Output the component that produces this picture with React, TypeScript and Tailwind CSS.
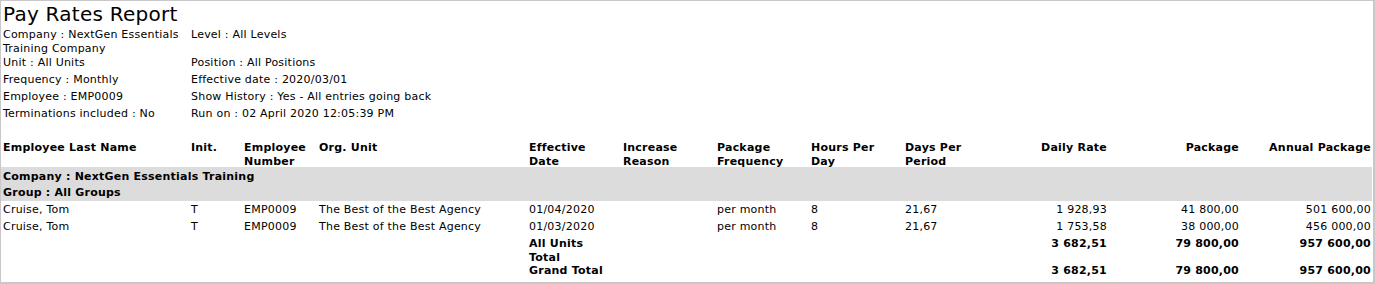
import React from "react";

const F = { fontFamily: '"DejaVu Sans", Verdana, sans-serif' };

const cols = "grid grid-cols-[188px_53px_75px_210px_94px_94px_94px_94px_94px_112px_132px_1fr]";

function InfoRow({ a, b, tall }: { a: React.ReactNode; b: string; tall?: boolean }) {
  return (
    <div className={`grid grid-cols-[188px_1fr] pt-[1px] ${tall ? "h-[28px]" : "h-[17px]"}`}>
      <div className="px-[2px] leading-[14px]">{a}</div>
      <div className="px-[2px] leading-[14px]">{b}</div>
    </div>
  );
}

type Row = string[];

const data: Row[] = [
  ["Cruise, Tom", "T", "EMP0009", "The Best of the Best Agency", "01/04/2020", "", "per month", "8", "21,67", "1 928,93", "41 800,00", "501 600,00"],
  ["Cruise, Tom", "T", "EMP0009", "The Best of the Best Agency", "01/03/2020", "", "per month", "8", "21,67", "1 753,58", "38 000,00", "456 000,00"],
];

function Cell({ children, right }: { children?: React.ReactNode; right?: boolean }) {
  return (
    <div className={`px-[2px] leading-[14px] whitespace-nowrap ${right ? "text-right" : ""}`}>
      {children}
    </div>
  );
}

export default function App() {
  return (
    <div
      className="w-[1375px] h-[284px] bg-white text-black text-[11px] tracking-[0.22px] border-l border-t border-r-2 border-b-2 border-[#c8c8c8] overflow-hidden"
      style={F}
    >
      <div className="px-[2px] text-[20px] leading-[26px] h-[26px] tracking-[0.25px]">Pay Rates Report</div>
      <div>
        <InfoRow tall a={<>Company : NextGen Essentials<br />Training Company</>} b="Level : All Levels" />
        <InfoRow a="Unit : All Units" b="Position : All Positions" />
        <InfoRow a="Frequency : Monthly" b="Effective date : 2020/03/01" />
        <InfoRow a="Employee : EMP0009" b="Show History : Yes - All entries going back" />
        <InfoRow a="Terminations included : No" b="Run on : 02 April 2020 12:05:39 PM" />
      </div>
      <div className="h-[17px]" />
      <div className={`${cols} h-[27px] pt-[1px] font-bold`}>
        <Cell>Employee Last Name</Cell>
        <Cell>Init.</Cell>
        <Cell>Employee<br />Number</Cell>
        <Cell>Org. Unit</Cell>
        <Cell>Effective<br />Date</Cell>
        <Cell>Increase<br />Reason</Cell>
        <Cell>Package<br />Frequency</Cell>
        <Cell>Hours Per<br />Day</Cell>
        <Cell>Days Per<br />Period</Cell>
        <Cell right>Daily Rate</Cell>
        <Cell right>Package</Cell>
        <Cell right>Annual Package</Cell>
      </div>
      <div className="bg-[#dcdcdc] mr-[1px] font-bold">
        <div className="h-[17px] px-[2px] pt-[3px] leading-[14px]">Company : NextGen Essentials Training</div>
        <div className="h-[17px] px-[2px] pt-[2px] leading-[14px]">Group : All Groups</div>
      </div>
      {data.map((r, i) => (
        <div key={i} className={`${cols} h-[17px] pt-[2px]`}>
          {r.map((c, j) => (
            <Cell key={j} right={j >= 9}>
              {c}
            </Cell>
          ))}
        </div>
      ))}
      <div className={`${cols} h-[28px] pt-[2px] font-bold`}>
        <Cell />
        <Cell />
        <Cell />
        <Cell />
        <Cell>All Units<br />Total</Cell>
        <Cell />
        <Cell />
        <Cell />
        <Cell />
        <Cell right>3 682,51</Cell>
        <Cell right>79 800,00</Cell>
        <Cell right>957 600,00</Cell>
      </div>
      <div className={`${cols} h-[17px] pt-[1px] font-bold`}>
        <Cell />
        <Cell />
        <Cell />
        <Cell />
        <Cell>Grand Total</Cell>
        <Cell />
        <Cell />
        <Cell />
        <Cell />
        <Cell right>3 682,51</Cell>
        <Cell right>79 800,00</Cell>
        <Cell right>957 600,00</Cell>
      </div>
    </div>
  );
}
